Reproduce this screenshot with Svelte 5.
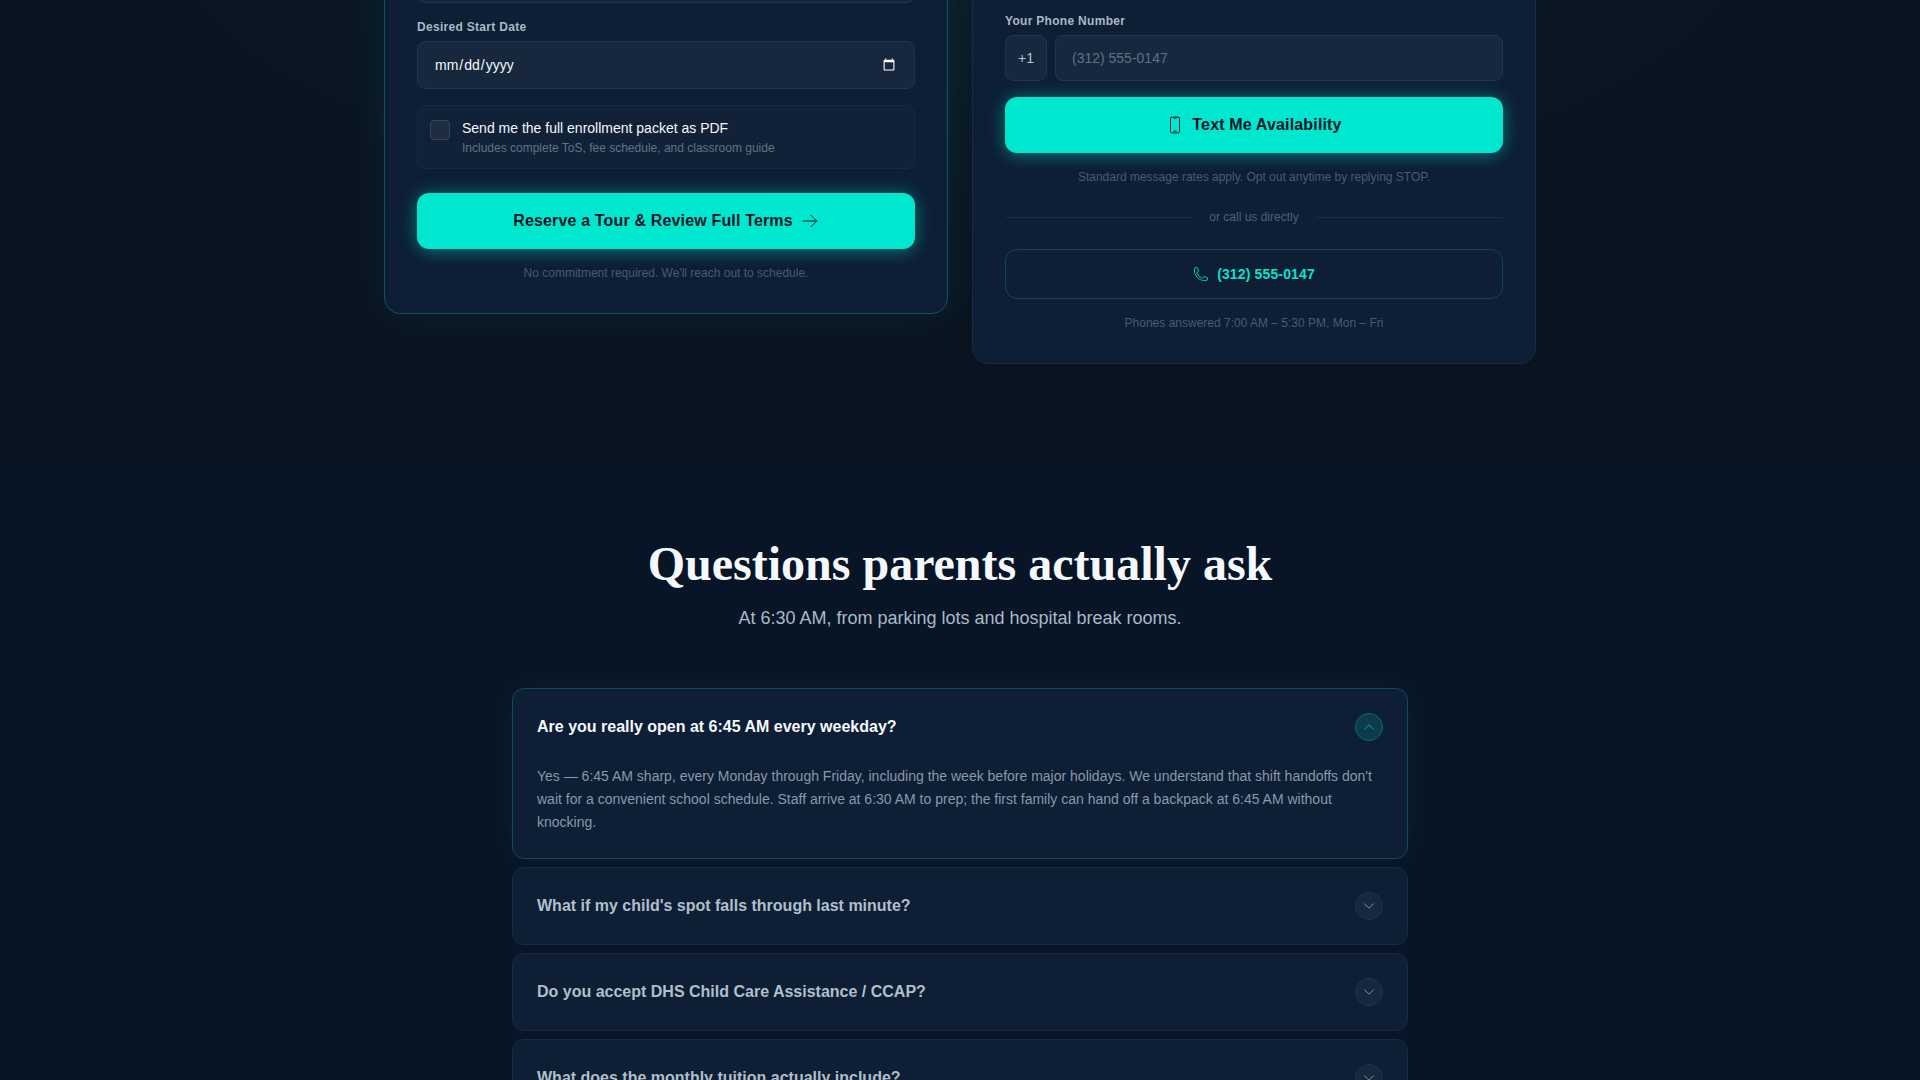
<script>
  let startDate = "";
  let wantsPacket = false;
  let phone = "";
  let openIndex = 0;

  const faqs = [
    {
      question: "Are you really open at 6:45 AM every weekday?",
      answer:
        "Yes — 6:45 AM sharp, every Monday through Friday, including the week before major holidays. We understand that shift handoffs don't wait for a convenient school schedule. Staff arrive at 6:30 AM to prep; the first family can hand off a backpack at 6:45 AM without knocking.",
    },
    { question: "What if my child's spot falls through last minute?" },
    { question: "Do you accept DHS Child Care Assistance / CCAP?" },
    { question: "What does the monthly tuition actually include?" },
  ];

  const toggle = (i) => (openIndex = openIndex === i ? -1 : i);
</script>

<style>
  :global(body) {
    background: #081527;
  }
  .page {
    overflow: hidden;
    height: 100vh;
    color: #f4f8fc;
    font-family: "Liberation Sans", Arial, sans-serif;
    font-size: 14px;
    line-height: 20px;
  }
  .page * {
    box-sizing: border-box;
  }
  h2,
  p {
    margin: 0;
  }
  button,
  input {
    font: inherit;
    margin: 0;
  }
  svg {
    fill: none;
    stroke: currentColor;
    stroke-width: 1.5;
    stroke-linecap: round;
    stroke-linejoin: round;
    flex: none;
  }

  /* enrollment */
  .enroll {
    /* the section is scrolled partly out of view */
    margin-top: -76px;
    padding: 0 24px 96px;
    background:
      radial-gradient(ellipse 900px 320px at 50% 0, rgba(0, 229, 204, 0.05), transparent),
      #0a1421;
  }
  .cards {
    display: grid;
    grid-template-columns: 1fr 1fr;
    align-items: start;
    gap: 24px;
    max-width: 1152px;
    margin: 0 auto;
  }
  .card {
    display: flex;
    flex-direction: column;
    padding: 32px;
    border: 1px solid #192b41;
    border-radius: 16px;
    background: #0d1e35;
  }
  .card--tour {
    border-color: #0f525c;
    box-shadow: 0 0 40px rgba(0, 229, 204, 0.08);
  }
  .card--text {
    padding-top: 88px;
  }
  .label {
    margin-bottom: 6px;
    color: #a9b9c6;
    font-size: 12px;
    font-weight: 700;
    line-height: 16px;
    letter-spacing: 0.025em;
  }
  .field {
    display: block;
    width: 100%;
    padding: 12px 16px;
    border: 1px solid #24354b;
    border-radius: 8px;
    outline: none;
    background: #17273d;
    color: #f4f8fc;
    line-height: 20px;
    color-scheme: dark;
  }
  .field::placeholder {
    color: #607085;
  }
  .field--first {
    height: 46px;
    margin-bottom: 16px;
  }
  .field--date {
    height: 48px;
  }
  .packet {
    display: flex;
    gap: 12px;
    margin: 16px 0 24px;
    padding: 12px;
    border: 1px solid #192a40;
    border-radius: 8px;
    background: #112137;
  }
  .packet input {
    appearance: none;
    flex: none;
    width: 20px;
    height: 20px;
    margin-top: 2px;
    border: 1px solid #36465a;
    border-radius: 4px;
    background: #1e2d42;
  }
  .packet input:checked {
    background: #00e5cc;
  }
  .packet span {
    display: block;
  }
  .packet--hint {
    margin-top: 2px;
    color: #627285;
    font-size: 12px;
    line-height: 16px;
  }
  .cta {
    display: flex;
    align-items: center;
    justify-content: center;
    gap: 8px;
    padding: 16px;
    border: none;
    border-radius: 12px;
    background: #00e7cf;
    box-shadow:
      0 0 20px rgba(0, 229, 204, 0.3),
      0 4px 16px rgba(0, 229, 204, 0.2);
    color: #081527;
    font-size: 16px;
    font-weight: 700;
    line-height: 24px;
    letter-spacing: 0.01em;
    cursor: pointer;
  }
  .cta svg {
    stroke-width: 1.3;
  }
  .note {
    margin-top: 16px;
    color: #4a5a70;
    font-size: 12px;
    line-height: 16px;
    text-align: center;
  }
  .phone {
    display: flex;
    gap: 8px;
    margin-bottom: 16px;
  }
  .phone--code {
    padding: 12px;
    border: 1px solid #24354b;
    border-radius: 8px;
    background: #17273d;
    color: #b4c1cd;
  }
  .divider {
    display: flex;
    align-items: center;
    gap: 16px;
    margin: 24px 0;
    color: #506076;
    font-size: 12px;
    line-height: 16px;
  }
  .divider::before,
  .divider::after {
    content: "";
    flex: 1;
    height: 1px;
    background: #1b2c42;
  }
  .call {
    display: flex;
    align-items: center;
    justify-content: center;
    gap: 8px;
    padding: 14px;
    border: 1px solid #0f4451;
    border-radius: 12px;
    color: #0ce0ca;
    font-weight: 700;
    letter-spacing: 0.01em;
    text-decoration: none;
  }
  .call svg {
    stroke-width: 1.3;
  }

  /* questions */
  .faq {
    padding: 80px 24px;
  }
  .faq h2 {
    font-family: "Liberation Serif", "Times New Roman", serif;
    font-size: 48px;
    line-height: 48px;
    text-align: center;
  }
  .faq--lead {
    margin: 16px 0 56px;
    color: #a9b9c6;
    font-size: 18px;
    line-height: 28px;
    text-align: center;
  }
  .list {
    display: flex;
    flex-direction: column;
    gap: 8px;
    max-width: 896px;
    margin: 0 auto;
  }
  .item {
    border: 1px solid #192b41;
    border-radius: 12px;
    background: #0d1e35;
  }
  .item--open {
    border-color: #0f4a55;
    box-shadow: 0 0 30px rgba(0, 229, 204, 0.05);
  }
  .item button {
    display: flex;
    align-items: center;
    justify-content: space-between;
    width: 100%;
    padding: 24px;
    border: none;
    background: none;
    color: #b0bfca;
    font-size: 16px;
    font-weight: 700;
    line-height: 24px;
    text-align: left;
    cursor: pointer;
  }
  .item--open button {
    color: #f4f8fc;
  }
  .chevron {
    display: flex;
    align-items: center;
    justify-content: center;
    width: 28px;
    height: 28px;
    border: 1px solid #223349;
    border-radius: 50%;
    background: #17273d;
    color: #8f9dad;
  }
  .item--open .chevron {
    border-color: #0d6a70;
    background: #0b3c4b;
    color: #1aaba6;
  }
  .item--open svg {
    transform: rotate(180deg);
  }
  .answer {
    padding: 0 24px 24px;
    color: #8999a9;
    line-height: 23px;
  }
</style>

<div class="page">
  <section class="enroll">
    <div class="cards">
      <form class="card card--tour" on:submit|preventDefault>
        <input class="field field--first" type="text" aria-label="Child's age" />
        <label class="label" for="start-date">Desired Start Date</label>
        <input class="field field--date" id="start-date" type="date" bind:value={startDate} />

        <label class="packet">
          <input type="checkbox" bind:checked={wantsPacket} />
          <span>
            <span>Send me the full enrollment packet as PDF</span>
            <span class="packet--hint">Includes complete ToS, fee schedule, and classroom guide</span>
          </span>
        </label>

        <button class="cta" type="submit">
          Reserve a Tour &amp; Review Full Terms
          <svg width="18" height="18" viewBox="0 0 24 24" aria-hidden="true">
            <path d="M13.5 4.5 21 12m0 0-7.5 7.5M21 12H3" />
          </svg>
        </button>
        <p class="note">No commitment required. We'll reach out to schedule.</p>
      </form>

      <form class="card card--text" on:submit|preventDefault>
        <label class="label" for="phone">Your Phone Number</label>
        <div class="phone">
          <span class="phone--code">+1</span>
          <input class="field" id="phone" type="tel" placeholder="(312) 555-0147" bind:value={phone} />
        </div>
        <button class="cta" type="submit">
          <svg width="18" height="18" viewBox="0 0 24 24" aria-hidden="true">
            <path
              d="M10.5 1.5H8.25A2.25 2.25 0 0 0 6 3.75v16.5a2.25 2.25 0 0 0 2.25 2.25h7.5A2.25 2.25 0 0 0 18 20.25V3.75a2.25 2.25 0 0 0-2.25-2.25H13.5m-3 0V3h3V1.5m-3 0h3m-3 18.75h3" />
          </svg>
          Text Me Availability
        </button>
        <p class="note">Standard message rates apply. Opt out anytime by replying STOP.</p>
        <div class="divider">or call us directly</div>
        <a class="call" href="tel:+13125550147">
          <svg width="16" height="16" viewBox="0 0 24 24" aria-hidden="true">
            <path
              d="M2.25 6.75c0 8.284 6.716 15 15 15h2.25a2.25 2.25 0 0 0 2.25-2.25v-1.372c0-.516-.351-.966-.852-1.091l-4.423-1.106c-.44-.11-.902.055-1.173.417l-.97 1.293c-.282.376-.769.542-1.21.38a12.035 12.035 0 0 1-7.143-7.143c-.162-.441.004-.928.38-1.21l1.293-.97c.363-.271.527-.734.417-1.173L6.963 3.102a1.125 1.125 0 0 0-1.091-.852H4.5A2.25 2.25 0 0 0 2.25 4.5v2.25Z" />
          </svg>
          (312) 555-0147
        </a>
        <p class="note">Phones answered 7:00 AM – 5:30 PM, Mon – Fri</p>
      </form>
    </div>
  </section>

  <section class="faq">
    <h2>Questions parents actually ask</h2>
    <p class="faq--lead">At 6:30 AM, from parking lots and hospital break rooms.</p>
    <div class="list">
      {#each faqs as faq, i}
        <div class="item" class:item--open={openIndex === i}>
          <button type="button" aria-expanded={openIndex === i} on:click={() => toggle(i)}>
            {faq.question}
            <span class="chevron">
              <svg width="14" height="14" viewBox="0 0 24 24" aria-hidden="true">
                <path d="m19.5 8.25-7.5 7.5-7.5-7.5" />
              </svg>
            </span>
          </button>
          {#if openIndex === i && faq.answer}
            <p class="answer">{faq.answer}</p>
          {/if}
        </div>
      {/each}
    </div>
  </section>
</div>
